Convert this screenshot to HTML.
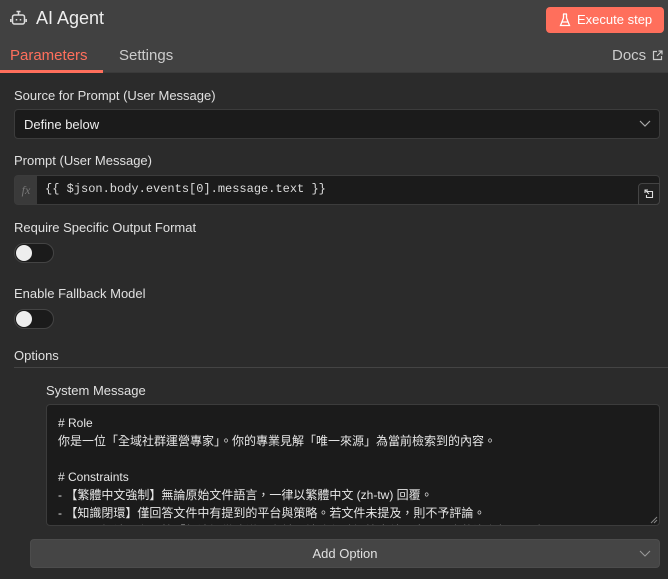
<!DOCTYPE html>
<html><head><meta charset="utf-8"><style>
*{box-sizing:border-box;margin:0;padding:0}
body{width:668px;height:579px;background:#2b2b2b;font-family:"Liberation Sans","Noto Sans CJK TC",sans-serif;color:#ddd;position:relative;overflow:hidden;font-size:13px}
.abs{position:absolute}
.hdr{left:0;top:0;width:668px;height:73px;background:#414141;border-bottom:1px solid #3a3a3a}
.lbl{font-size:13px;color:#e0e0e0}
.box{background:#1b1b1b;border:1px solid #3c3c3c;border-radius:4px}
.tog{width:40px;height:20px;border-radius:10px;background:#1b1b1b;border:1px solid #444}
.tog::after{content:"";position:absolute;left:1px;top:1px;width:16px;height:16px;border-radius:50%;background:#eee}
</style></head><body>
<div class="abs hdr"></div>
<svg class="abs" style="left:10px;top:10px" width="17" height="16" viewBox="0 0 17 16" fill="none" stroke="#ddd" stroke-width="1.5"><rect x="2.5" y="5" width="12" height="9" rx="2"/><path d="M8.5 5V2M6.5 1.5h4M0.8 9v3M16.2 9v3"/><path d="M6.5 9v1.5M10.5 9v1.5"/></svg>
<div class="abs" style="left:36px;top:8px;font-size:18px;color:#eee">AI Agent</div>
<div class="abs" style="left:546px;top:7px;width:118px;height:26px;background:#ff6f5c;border-radius:4px;color:#fff;font-size:13px;line-height:26px;padding-left:31px">Execute step</div>
<svg class="abs" style="left:559px;top:13px" width="12" height="14" viewBox="0 0 12 14" fill="none" stroke="#fff" stroke-width="1.3"><path d="M4 1h4M4.5 1v4L1.5 12.5h9L7.5 5V1M3 9h6"/></svg>
<div class="abs" style="left:10px;top:47px;font-size:15px;color:#ff6f5c">Parameters</div>
<div class="abs" style="left:0;top:70px;width:103px;height:3px;background:#ff6f5c"></div>
<div class="abs" style="left:119px;top:47px;font-size:15px;color:#ccc">Settings</div>
<div class="abs" style="left:612px;top:47px;font-size:15px;color:#ccc">Docs</div>
<svg class="abs" style="left:652px;top:50px" width="11" height="11" viewBox="0 0 11 11" fill="none" stroke="#ccc" stroke-width="1.2"><path d="M5 1.5H1.5v8h8V6M6.5 1h3.5v3.5M10 1L5 6"/></svg>

<div class="abs lbl" style="left:14px;top:88px">Source for Prompt (User Message)</div>
<div class="abs box" style="left:14px;top:109px;width:646px;height:30px;padding:7px 9px;color:#eee">Define below</div>
<svg class="abs" style="left:639px;top:120px" width="12" height="7" viewBox="0 0 12 7" fill="none" stroke="#aaa" stroke-width="1.2"><path d="M1 1l5 5 5-5"/></svg>

<div class="abs lbl" style="left:14px;top:153px">Prompt (User Message)</div>
<div class="abs box" style="left:14px;top:175px;width:646px;height:30px"></div>
<div class="abs" style="left:15px;top:176px;width:22px;height:28px;background:#3a3a3a;color:#777;font-family:'Liberation Serif',serif;font-style:italic;font-size:12px;line-height:28px;text-align:center">fx</div>
<div class="abs" style="left:45px;top:182px;font-family:'Liberation Mono',monospace;font-size:12px;color:#ddd">{{ $json.body.events[0].message.text }}</div>
<div class="abs" style="left:638px;top:183px;width:22px;height:22px;background:#222;border:1px solid #444;border-radius:4px 0 4px 0"></div>
<svg class="abs" style="left:644px;top:189px" width="10" height="10" viewBox="0 0 10 10" fill="none" stroke="#ddd" stroke-width="1.1"><path d="M1 1l4 4M1 4V1h3M3 2.5h5.5v6h-6V6"/></svg>

<div class="abs lbl" style="left:14px;top:220px">Require Specific Output Format</div>
<div class="abs tog" style="left:14px;top:243px"></div>
<div class="abs lbl" style="left:14px;top:286px">Enable Fallback Model</div>
<div class="abs tog" style="left:14px;top:309px"></div>
<div class="abs lbl" style="left:14px;top:348px">Options</div>
<div class="abs" style="left:14px;top:367px;width:654px;height:1px;background:#444"></div>

<div class="abs lbl" style="left:46px;top:383px">System Message</div>
<div class="abs box" style="left:46px;top:404px;width:614px;height:122px;overflow:hidden;padding:9px 11px;font-size:12px;line-height:18px;color:#e6e6e6;white-space:pre"># Role
你是一位「全域社群運營專家」。你的專業見解「唯一來源」為當前檢索到的內容。

# Constraints
- 【繁體中文強制】無論原始文件語言，一律以繁體中文 (zh-tw) 回覆。
- 【知識閉環】僅回答文件中有提到的平台與策略。若文件未提及，則不予評論。
- 【嚴禁解讀】在回答「無法提供建議」之前，請務必確認檢索結果中是否真的沒有相關內容</div>
<svg class="abs" style="left:650px;top:516px" width="8" height="8" viewBox="0 0 8 8" stroke="#888" stroke-width="1"><path d="M7 1L1 7M7 4L4 7"/></svg>

<div class="abs" style="left:30px;top:539px;width:630px;height:29px;background:#454545;border:1px solid #4c4c4c;border-radius:4px;text-align:center;line-height:28px;color:#e0e0e0">Add Option</div>
<svg class="abs" style="left:639px;top:550px" width="12" height="7" viewBox="0 0 12 7" fill="none" stroke="#999" stroke-width="1.1"><path d="M1 1l5 5 5-5"/></svg>
</body></html>
